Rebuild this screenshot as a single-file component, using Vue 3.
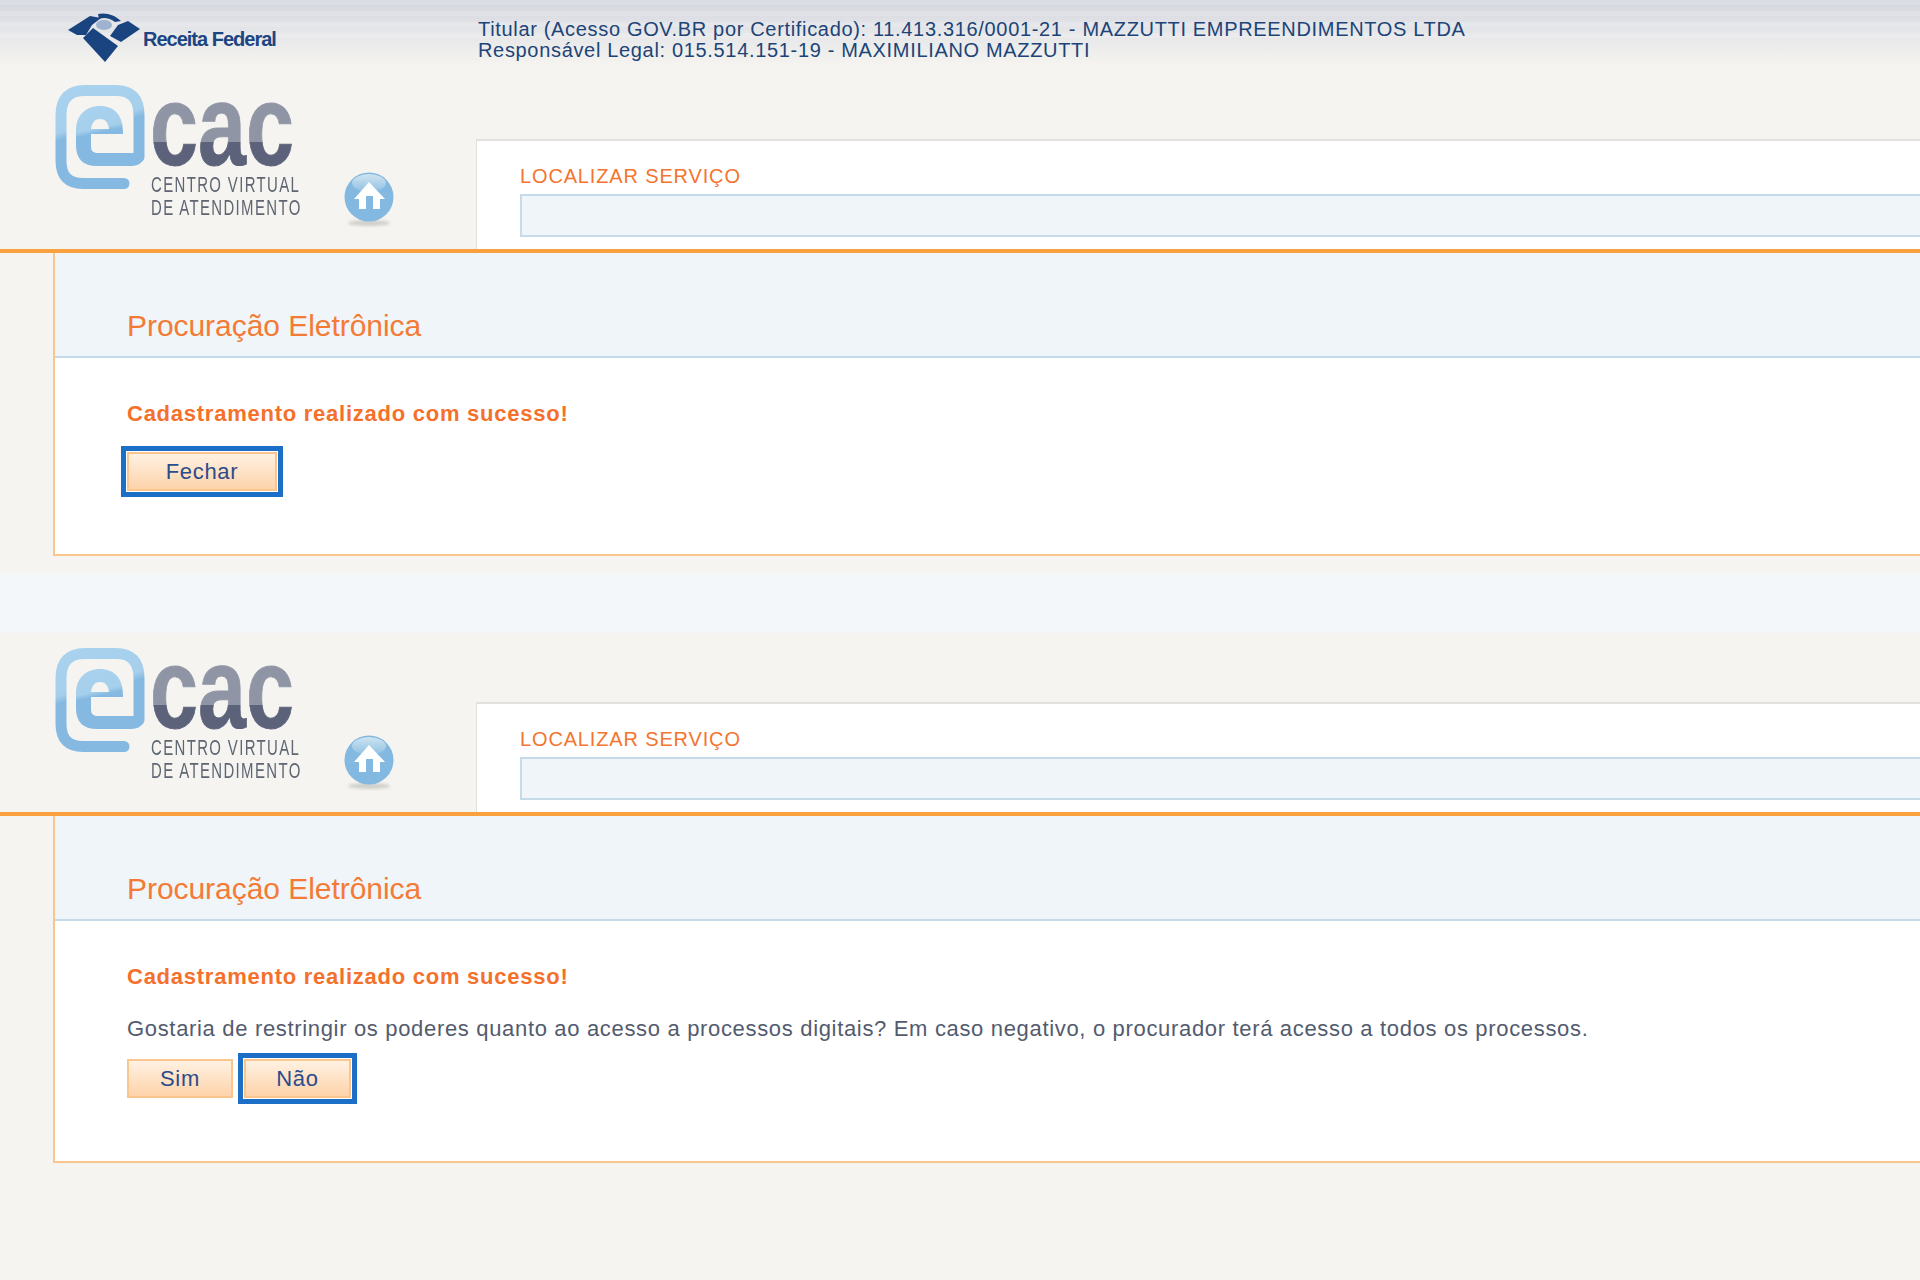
<script setup>
const sections = [
  { id: 1, top: true, question: '', buttons: [{ label: 'Fechar', focus: true, cls: 'wide' }] },
  { id: 2, top: false, question: 'Gostaria de restringir os poderes quanto ao acesso a processos digitais? Em caso negativo, o procurador terá acesso a todos os processos.', buttons: [{ label: 'Sim', focus: false, cls: 'sim' }, { label: 'Não', focus: true, cls: 'nao' }] }
]
</script>

<template>
  <div class="page">
    <div class="topbar">
      <div class="rf">
        <svg width="74" height="50" viewBox="0 0 74 50">
          <path d="M0 17 L22 3 L33 5 L24 12 L18 22 L9 22 Z" fill="#1a4480"/>
          <path d="M15 25 L25 15 L50 33 L37 49 Z" fill="#1a4480"/>
          <path d="M42 23 L50 12 L60 8 L72 16 L53 29 Z" fill="#1a4480"/>
          <path d="M30 1 C38 -1 47 2 53 8 L47 9 C42 5 36 4 31 6 Z" fill="#1a4480"/>
          <ellipse cx="36" cy="12" rx="8" ry="5" fill="#9db3cf"/>
        </svg>
        <span class="rf-text">Receita Federal</span>
      </div>
      <div class="holder">
        <div>Titular (Acesso GOV.BR por Certificado): 11.413.316/0001-21 - MAZZUTTI EMPREENDIMENTOS LTDA</div>
        <div>Responsável Legal: 015.514.151-19 - MAXIMILIANO MAZZUTTI</div>
      </div>
    </div>
    <template v-for="s in sections" :key="s.id">
      <div class="head">
        <div class="logo">
          <svg class="e" width="90" height="106" viewBox="0 0 90 106">
            <defs>
              <linearGradient :id="'eg' + s.id" x1="0" y1="0" x2="0.25" y2="1">
                <stop offset="0" stop-color="#a9d2ee"/>
                <stop offset="0.42" stop-color="#a6cfec"/>
                <stop offset="0.5" stop-color="#85b9e1"/>
                <stop offset="1" stop-color="#85b9e1"/>
              </linearGradient>
            </defs>
            <path d="M69 98.5 H28 Q6 98.5 6 76 V30 Q6 5.5 30 5.5 H61 Q84 5.5 84 30 V72" fill="none" :stroke="'url(#eg' + s.id + ')'" stroke-width="11" stroke-linecap="round"/>
            <path d="M21 46 C21 30 31 21 45 21 C59 21 68 30 68 47 V49 H36 V62 Q36 68 43 68 H89 V70 Q88 81 76 81 H42 Q21 81 21 60 Z" :fill="'url(#eg' + s.id + ')'"/>
            <path d="M36 44 C37 37 40 34 45 34 C50 34 53 37 54 44 Z" fill="#f5f4f0"/>
          </svg>
          <div class="logo-right">
            <div class="cac">cac</div>
            <div class="sub">CENTRO VIRTUAL<br>DE ATENDIMENTO</div>
          </div>
          <svg class="home" width="52" height="56" viewBox="0 0 52 56">
            <defs>
              <filter :id="'hs' + s.id" x="-20%" y="-100%" width="140%" height="300%"><feGaussianBlur stdDeviation="1.5"/></filter>
              <linearGradient :id="'hg' + s.id" x1="0" y1="0" x2="0" y2="1">
                <stop offset="0" stop-color="#cfe4f0"/>
                <stop offset="1" stop-color="#8fc0e4"/>
              </linearGradient>
            </defs>
            <ellipse cx="26" cy="51" rx="21" ry="3" fill="#cfcfcb" :filter="'url(#hs' + s.id + ')'"/>
            <circle cx="26" cy="25" r="24.5" fill="#83b8e0"/>
            <ellipse cx="26" cy="11" rx="17" ry="9" :fill="'url(#hg' + s.id + ')'"/>
            <path d="M26 10 L42 27 H37 V37 H30 V24 H23 V37 H16 V27 H11 Z" fill="#fff"/>
          </svg>
        </div>
        <div class="search">
          <div class="search-label">LOCALIZAR SERVIÇO</div>
          <div class="search-input"></div>
        </div>
      </div>
      <div class="content">
        <div class="title-row"><h1>Procuração Eletrônica</h1></div>
        <div class="body">
          <p class="ok">Cadastramento realizado com sucesso!</p>
          <p v-if="s.question" class="q">{{ s.question }}</p>
          <div class="btns" :class="{ tight: s.question }">
            <button v-for="b in s.buttons" :key="b.label" :class="[b.cls, { focus: b.focus }]">{{ b.label }}</button>
          </div>
        </div>
      </div>
      <div v-if="s.top" class="gap"></div>
    </template>
  </div>
</template>

<style>
html, body { margin: 0; background: #f5f4f0; }
</style>

<style scoped>
.page { width: 1920px; height: 1280px; overflow: hidden; background: #f5f4f0; font-family: "Liberation Sans", Arial, sans-serif; }
.topbar { height: 70px; display: flex; background: repeating-linear-gradient(rgba(255,255,255,.16) 0 5px, rgba(255,255,255,0) 5px 11px) 0 0 / 100% 44px no-repeat, linear-gradient(#d3d6df, #e4e5e8 30px, #f5f4f0 66px); }
.rf { width: 478px; padding: 13px 0 0 68px; box-sizing: border-box; display: flex; align-items: flex-start; }
.rf-text { font: bold 20px "Liberation Sans", sans-serif; color: #1c4581; letter-spacing: -1px; margin: 15px 0 0 1px; white-space: nowrap; }
.holder { padding-top: 19px; font-size: 20px; line-height: 21px; letter-spacing: .67px; color: #1c4478; white-space: nowrap; }
.head { display: flex; height: 179px; border-bottom: 4px solid #f9a03f; }
.logo { width: 476px; flex: none; display: flex; align-items: flex-start; padding: 15px 0 0 55px; box-sizing: border-box; }
.e { flex: none; }
.logo-right { width: 191px; flex: none; margin: 0 0 0 7px; }
.cac { font: bold 115px/80px "Liberation Sans", sans-serif; padding-bottom: 4px; margin-left: -2px; width: 192px; white-space: nowrap; transform: scaleX(.75); transform-origin: left top; color: transparent; -webkit-text-stroke: 1px transparent; background: linear-gradient(#8f95a4 68%, #5c6279 68%); -webkit-background-clip: text; background-clip: text; }
.sub { font: 22px/23px "Liberation Sans", sans-serif; letter-spacing: 2px; color: #5f6672; transform: scaleX(.68); transform-origin: left top; white-space: nowrap; margin: 4px 0 0 -1px; }
.home { flex: none; margin-top: 87px; }
.search { flex: 1; background: #fff; margin-top: 69px; border-left: 1px solid #e2e1de; border-top: 2px solid #e2e1de; padding: 23px 0 0 43px; }
.search-label { font-size: 20px; color: #f4752f; line-height: 24px; letter-spacing: .85px; }
.search-input { height: 39px; background: #f0f5f9; border: 2px solid #c5dbea; border-right: 0; margin-top: 6px; }
.content { margin-left: 53px; background: #fff; border-left: 2px solid #fbc68e; border-bottom: 2px solid #fbc68e; }
.title-row { height: 105px; background: #f0f5f9; border-bottom: 2px solid #c5dbea; box-sizing: border-box; padding: 55px 0 0 72px; }
h1 { margin: 0; font-weight: normal; font-size: 30px; line-height: 36px; letter-spacing: -.05px; color: #f47b36; }
.body { padding: 43px 0 63px 72px; }
.ok { margin: 0; font-weight: bold; font-size: 22px; line-height: 26px; letter-spacing: .75px; color: #f5702a; }
.q { margin: 26px 0 0; font-size: 22px; line-height: 26px; letter-spacing: .67px; color: #535b6e; white-space: nowrap; }
.btns { display: flex; gap: 11px; margin-top: 25px; }
.btns.tight { margin-top: 17px; }
button { font: 22px "Liberation Sans", sans-serif; letter-spacing: .7px; color: #2b4c8c; height: 39px; border: 2px solid #fbc68e; background: linear-gradient(#fff1e2, #fdd3aa); padding: 0; }
.wide { width: 150px; }
.sim { width: 106px; }
.nao { width: 107px; }
.focus { outline: 5px solid #1b6fc6; outline-offset: 1px; }
.gap { height: 60px; margin-top: 17px; background: #f3f7fa; }
</style>
